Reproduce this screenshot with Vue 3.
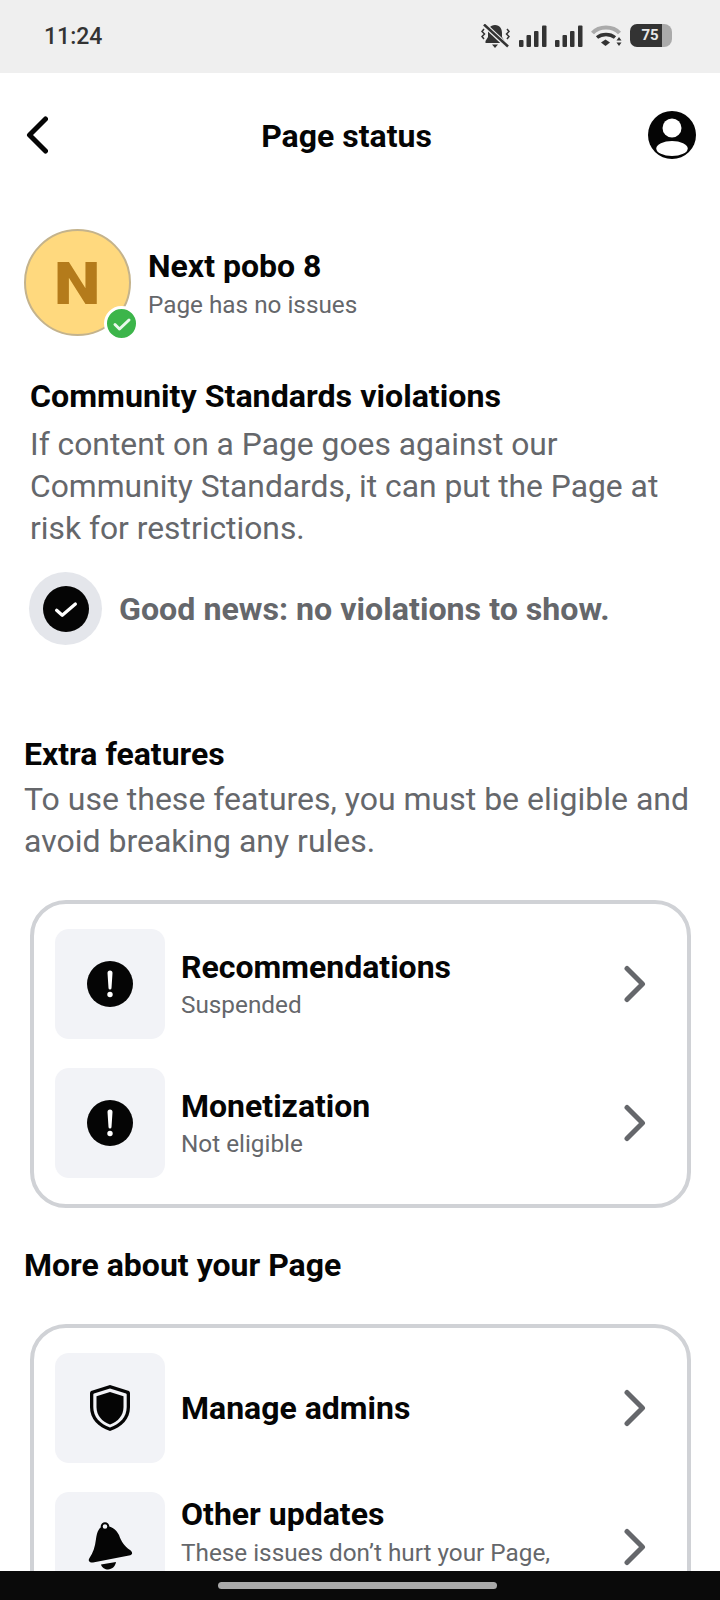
<template>
  <div class="page">
    <div class="status-bar">
      <span class="status-time">11:24</span>
      <div class="status-icons">
        <svg viewBox="0 0 30 24" width="30" height="24">
          <path d="M14 1C9 1 7 5 7 9v4l-2.500 4v2h19v-2L21 13V9c0-4-2-8-7-8zM11 20.500h6L14 24z" fill="#333" />
          <path d="M3 0.500L26 22" stroke="#efefef" stroke-width="5" />
          <path d="M3 0.500L27 22.500" stroke="#333" stroke-width="2.500" />
          <path d="M3 5L1 7.500l2.500 2.500L1 12.500 3 15M26 5l2 2.500-2.500 2.500L28 12.500 26 15" stroke="#333" stroke-width="1.500" fill="none" />
        </svg>
        <svg v-for="n in 2" :key="n" viewBox="0 0 28 22" width="28" height="22">
          <rect x="0" y="15" width="4.500" height="7" rx="1" fill="#333" />
          <rect x="7.500" y="10" width="4.500" height="12" rx="1" fill="#333" />
          <rect x="15" y="6" width="4.500" height="16" rx="1" fill="#333" />
          <rect x="23" y="0.500" width="4.500" height="21.500" rx="1" fill="#333" />
        </svg>
        <svg viewBox="0 0 31 23" width="31" height="23">
          <path d="M1.500 9C8 1.500 22 1.500 28.500 9" stroke="#aaa" stroke-width="4" fill="none" />
          <path d="M6 13.500c5-4 13-4 18 0" stroke="#333" stroke-width="3.500" fill="none" />
          <path d="M10 18.500l4.500-3 4.500 3-4.500 3.500z" fill="#333" />
          <path d="M28 13l2.500 3.500h-5zM28 22l-2.500-3.500h5z" fill="#333" />
        </svg>
        <div class="battery">
          <div class="battery-fill">75</div>
          <div class="battery-rest"></div>
        </div>
      </div>
    </div>

    <div class="nav-bar">
      <svg viewBox="0 0 24 38" width="24" height="38">
        <path d="M21.500 3L5.500 19l16 16" stroke="#050505" stroke-width="5" stroke-linecap="round" stroke-linejoin="round" fill="none" />
      </svg>
      <strong class="nav-title">Page status</strong>
      <svg viewBox="0 0 48 48" width="48" height="48">
        <circle cx="24" cy="24" r="24" fill="#050505" />
        <circle cx="24" cy="17" r="9.500" fill="#fff" />
        <ellipse cx="24" cy="37.500" rx="15.700" ry="7.500" fill="#fff" />
      </svg>
    </div>

    <div class="page-head">
      <div class="avatar">
        <span>N</span>
        <div class="avatar-badge">
          <svg viewBox="0 0 24 24" width="24" height="24">
            <path d="M5 12.500l4.500 4.500L19 8" stroke="#e9f8ec" stroke-width="3" stroke-linecap="round" stroke-linejoin="round" fill="none" />
          </svg>
        </div>
      </div>
      <div>
        <div class="page-name">Next pobo 8</div>
        <div class="page-state">Page has no issues</div>
      </div>
    </div>

    <section class="violations">
      <h2>Community Standards violations</h2>
      <p>If content on a Page goes against our Community Standards, it can put the Page at risk for restrictions.</p>
      <div class="good-news">
        <div class="good-news__ring">
          <div class="good-news__dot">
            <svg viewBox="0 0 24 24" width="30" height="30">
              <path d="M4.500 13l4.500 4L19.500 8" stroke="#fff" stroke-width="2.600" stroke-linecap="round" stroke-linejoin="round" fill="none" />
            </svg>
          </div>
        </div>
        <strong>Good news: no violations to show.</strong>
      </div>
    </section>

    <section class="extra">
      <h2>Extra features</h2>
      <p>To use these features, you must be eligible and avoid breaking any rules.</p>
    </section>

    <div class="card card--features">
      <div v-for="row in featureRows" :key="row.title" class="row">
        <div class="row-icon">
          <svg viewBox="0 0 46 46" width="46" height="46">
            <circle cx="23" cy="23" r="23" fill="#050505" />
            <path d="M20.500 12a2.500 2.500 0 0 1 5 0l-1 15a1.500 1.500 0 0 1-3 0z" fill="#fff" />
            <circle cx="23" cy="33.500" r="2.700" fill="#fff" />
          </svg>
        </div>
        <div class="row-text">
          <div class="row-title">{{ row.title }}</div>
          <div class="row-sub">{{ row.sub }}</div>
        </div>
        <svg viewBox="0 0 24 38" width="24" height="38">
          <path d="M4 3.500L19.500 19 4 34.500" stroke="#65676b" stroke-width="5" stroke-linecap="round" stroke-linejoin="round" fill="none" />
        </svg>
      </div>
    </div>

    <h2 class="more-title">More about your Page</h2>

    <div class="card">
      <div class="row">
        <div class="row-icon">
          <svg viewBox="0 0 40 46" width="40" height="46">
            <path d="M20 0L39 6c1 1 1 2 1 3v13c0 12-8 20-20 24C8 42 0 34 0 22V9c0-1 0-2 1-3z" fill="#050505" />
            <path d="M20 3.500L36 8.500c.5.300.7.700.7 1.200V22c0 10-6.700 17-16.700 20.500C10 39 3.300 32 3.300 22V9.700c0-.500.2-.900.7-1.200z" fill="#f2f3f7" />
            <path d="M20 7L33.500 11.200V22c0 8.500-5.500 14.500-13.500 17.500C12 36.500 6.500 30.500 6.500 22V11.200z" fill="#050505" />
          </svg>
        </div>
        <div class="row-text">
          <div class="row-title">Manage admins</div>
        </div>
        <svg viewBox="0 0 24 38" width="24" height="38">
          <path d="M4 3.500L19.500 19 4 34.500" stroke="#65676b" stroke-width="5" stroke-linecap="round" stroke-linejoin="round" fill="none" />
        </svg>
      </div>
      <div class="row">
        <div class="row-icon">
          <svg viewBox="0 0 46 50" width="46" height="50">
            <path d="M18 4C12 4 10 10 9 17c-1 8-3 14-6.500 19C.5 39 3 41 6 40.500l36-7c4-.500 4-3.500 1-5.500-6-4-9-9-11-15C29 7 24 4 18 4z" fill="#050505" />
            <circle cx="18" cy="4.500" r="3.300" fill="#f2f3f7" stroke="#050505" stroke-width="2" />
            <path d="M14 42.500l15-2.500c-1 5-4 7-8 7.500-3 0-6-1.500-7-5z" fill="#050505" />
          </svg>
        </div>
        <div class="row-text row-text--top">
          <div class="row-title">Other updates</div>
          <div class="row-sub">These issues don’t hurt your Page,</div>
        </div>
        <svg viewBox="0 0 24 38" width="24" height="38">
          <path d="M4 3.500L19.500 19 4 34.500" stroke="#65676b" stroke-width="5" stroke-linecap="round" stroke-linejoin="round" fill="none" />
        </svg>
      </div>
    </div>

    <div class="home-bar">
      <div class="home-pill"></div>
    </div>
  </div>
</template>

<script setup>
const featureRows = [
  { title: 'Recommendations', sub: 'Suspended' },
  { title: 'Monetization', sub: 'Not eligible' }
]
</script>

<style>
html,
body {
  margin: 0;
  background: #fff;
}
</style>

<style scoped>
.page {
  position: relative;
  width: 720px;
  height: 1600px;
  overflow: hidden;
  background: #fff;
  color: #050505;
  font-family: Roboto, "Liberation Sans", sans-serif;
}

.status-bar {
  height: 73px;
  padding: 0 48px 0 44px;
  display: flex;
  align-items: center;
  justify-content: space-between;
  background: #efefef;
}

.status-time {
  font-size: 23px;
  font-weight: 500;
  color: #333;
}

.status-icons {
  display: flex;
  align-items: center;
  gap: 8px;
  margin-top: -2px;
}

.battery {
  display: flex;
  height: 23px;
}

.battery-fill {
  width: 32px;
  box-sizing: border-box;
  padding-left: 8px;
  border-radius: 7px 0 0 7px;
  background: #333;
  color: #e8e8e8;
  font-size: 15px;
  font-weight: 700;
  line-height: 23px;
  text-align: center;
}

.battery-rest {
  width: 10px;
  border-radius: 0 8px 8px 0;
  background: #aaa;
}

.nav-bar {
  height: 124px;
  padding: 0 24px;
  display: flex;
  align-items: center;
  justify-content: space-between;
}

.nav-title {
  margin: 2px 3px 0 0;
  font-size: 32px;
  font-weight: 700;
}

.page-head {
  display: flex;
  align-items: center;
  gap: 17px;
  margin: 32px 0 0 24px;
}

.avatar {
  position: relative;
  width: 107px;
  height: 107px;
  box-sizing: border-box;
  border: 2px solid #c4b38c;
  border-radius: 50%;
  background: #ffd97e;
  display: flex;
  align-items: center;
  justify-content: center;
}

.avatar span {
  margin-top: 2px;
  color: #b47b1b;
  font-size: 60px;
  font-weight: 900;
  transform: scaleX(1.1);
}

.avatar-badge {
  position: absolute;
  right: -10px;
  bottom: -7px;
  width: 29px;
  height: 29px;
  border: 3px solid #fff;
  border-radius: 50%;
  background: #3cb54a;
  display: flex;
  align-items: center;
  justify-content: center;
}

.page-name {
  margin-top: 1px;
  font-size: 32px;
  font-weight: 700;
  line-height: 38px;
}

.page-state {
  margin-top: 5px;
  color: #65676b;
  font-size: 24.3px;
  line-height: 30px;
}

h2 {
  margin: 0;
  font-size: 32px;
  font-weight: 700;
  line-height: 38px;
}

.violations {
  margin: 41px 0 0 30px;
  width: 650px;
}

.violations h2 {
  font-size: 32.2px;
}

.violations p {
  margin: 8px 0 0;
  font-size: 31.8px;
}

.violations p,
.extra p {
  color: #65676b;
  line-height: 42px;
}

.good-news {
  display: flex;
  align-items: center;
  gap: 17px;
  margin: 23px 0 0 -1px;
}

.good-news__ring {
  width: 73px;
  height: 73px;
  border-radius: 50%;
  background: #e4e6eb;
  display: flex;
  align-items: center;
  justify-content: center;
}

.good-news__dot {
  width: 46px;
  height: 46px;
  border-radius: 50%;
  background: #050505;
  display: flex;
  align-items: center;
  justify-content: center;
}

.good-news strong {
  color: #65676b;
  font-size: 32.2px;
  font-weight: 700;
}

.extra {
  margin: 90px 0 0 24px;
  width: 680px;
}

.extra p {
  margin: 5px 0 0;
  font-size: 32px;
}

.card {
  margin: 0 29px 0 30px;
  padding: 25px 0 0;
  box-sizing: border-box;
  border: 4px solid #d0d2d6;
  border-radius: 36px;
}

.card--features {
  margin-top: 38px;
  height: 308px;
}

.row {
  display: flex;
  align-items: center;
  padding: 0 40px 0 21px;
  margin-bottom: 29px;
}

.row-icon {
  flex: none;
  width: 110px;
  height: 110px;
  border-radius: 14px;
  background: #f2f3f7;
  display: flex;
  align-items: center;
  justify-content: center;
}

.row-text {
  flex: 1;
  min-width: 0;
  margin-left: 16px;
}

.row-text--top {
  align-self: flex-start;
  padding-top: 3px;
}

.row-title {
  font-size: 32px;
  font-weight: 700;
  line-height: 38px;
}

.row-sub {
  margin-top: 4px;
  color: #65676b;
  font-size: 24.3px;
  line-height: 30px;
}

.row-text--top .row-sub {
  margin-top: 5px;
}

.more-title {
  margin: 38px 0 40px 24px;
}

.home-bar {
  position: absolute;
  left: 0;
  right: 0;
  bottom: 0;
  height: 29px;
  padding: 11px 5px 0 0;
  box-sizing: border-box;
  background: #0a0a0a;
  display: flex;
  justify-content: center;
}

.home-pill {
  width: 279px;
  height: 7px;
  border-radius: 4px;
  background: #a9a9a9;
}
</style>
